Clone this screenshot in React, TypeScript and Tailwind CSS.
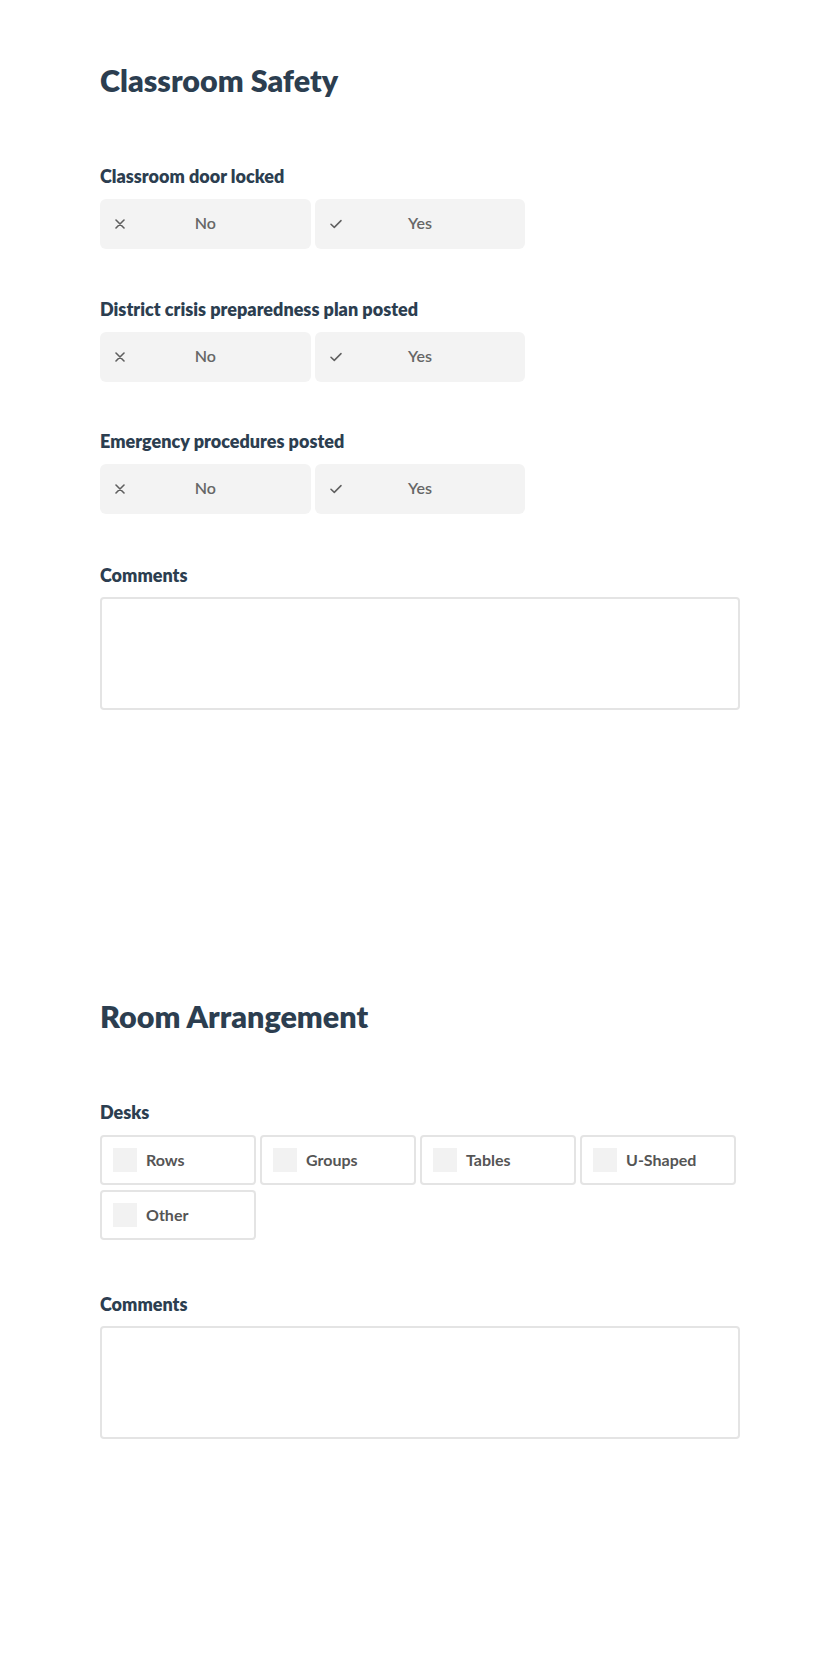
import React from "react";

const XIcon = () => (
  <svg width="10" height="10" viewBox="0 0 10 10" fill="none">
    <path d="M1 1L9 9M9 1L1 9" stroke="#5f5f5f" strokeWidth="1.6" strokeLinecap="round" />
  </svg>
);

const CheckIcon = () => (
  <svg width="12" height="10" viewBox="0 0 12 10" fill="none">
    <path d="M1 5.2L4.3 8.4L11 1.6" stroke="#5f5f5f" strokeWidth="1.5" strokeLinecap="round" strokeLinejoin="round" />
  </svg>
);

function ChoiceButton({ icon, label }: { icon: React.ReactNode; label: string }) {
  return (
    <div className="grid h-[50px] grid-cols-[1fr_auto_1fr] items-center rounded-[6px] bg-[#f3f3f3] pb-[2px]">
      <div className="flex pl-[15px] pt-[2px]">{icon}</div>
      <span className="text-[16px] font-semibold leading-[18px] text-[#666666]">{label}</span>
      <div />
    </div>
  );
}

function YesNo({ label, first }: { label: string; first?: boolean }) {
  return (
    <div className={first ? "mt-[66px]" : "mt-[48.5px]"}>
      <div className="text-[18px] font-extrabold leading-[22px] text-[#2c3e50]">{label}</div>
      <div className="mt-[12px] grid grid-cols-3 gap-[4px]">
        <ChoiceButton icon={<XIcon />} label="No" />
        <ChoiceButton icon={<CheckIcon />} label="Yes" />
      </div>
    </div>
  );
}

function Comments({ mt }: { mt: string }) {
  return (
    <div className={mt}>
      <div className="text-[18px] font-extrabold leading-[22px] text-[#2c3e50]">Comments</div>
      <div className="mt-[11px] h-[113px] rounded-[4px] border-2 border-[#e4e4e4] bg-white" />
    </div>
  );
}

function CheckBox({ label }: { label: string }) {
  return (
    <div className="flex h-[50px] w-[156px] items-center rounded-[4px] border-2 border-[#e4e4e4] bg-white pl-[11px]">
      <div className="h-[24px] w-[24px] bg-[#f2f2f2]" />
      <span className="ml-[9px] text-[16px] font-bold leading-[18px] text-[#555555]">{label}</span>
    </div>
  );
}

export default function App() {
  return (
    <div
      className="min-h-[1680px] w-full bg-white"
      style={{ fontFamily: "Lato, 'Open Sans', sans-serif" }}
    >
      <div className="mx-auto w-[640px] pt-[61px]">
        <h1 className="text-[30.5px] font-extrabold leading-[38px] text-[#2c3e50]">Classroom Safety</h1>
        <YesNo label="Classroom door locked" first />
        <YesNo label="District crisis preparedness plan posted" />
        <YesNo label="Emergency procedures posted" />
        <Comments mt="mt-[50px]" />

        <h1 className="mt-[287px] text-[30.5px] font-extrabold leading-[38px] text-[#2c3e50]">Room Arrangement</h1>
        <div className="mt-[66px]">
          <div className="text-[18px] font-extrabold leading-[22px] text-[#2c3e50]">Desks</div>
          <div className="mt-[12px] flex flex-wrap gap-x-[4px] gap-y-[5px]">
            <CheckBox label="Rows" />
            <CheckBox label="Groups" />
            <CheckBox label="Tables" />
            <CheckBox label="U-Shaped" />
            <CheckBox label="Other" />
          </div>
        </div>
        <Comments mt="mt-[53px]" />
      </div>
    </div>
  );
}
